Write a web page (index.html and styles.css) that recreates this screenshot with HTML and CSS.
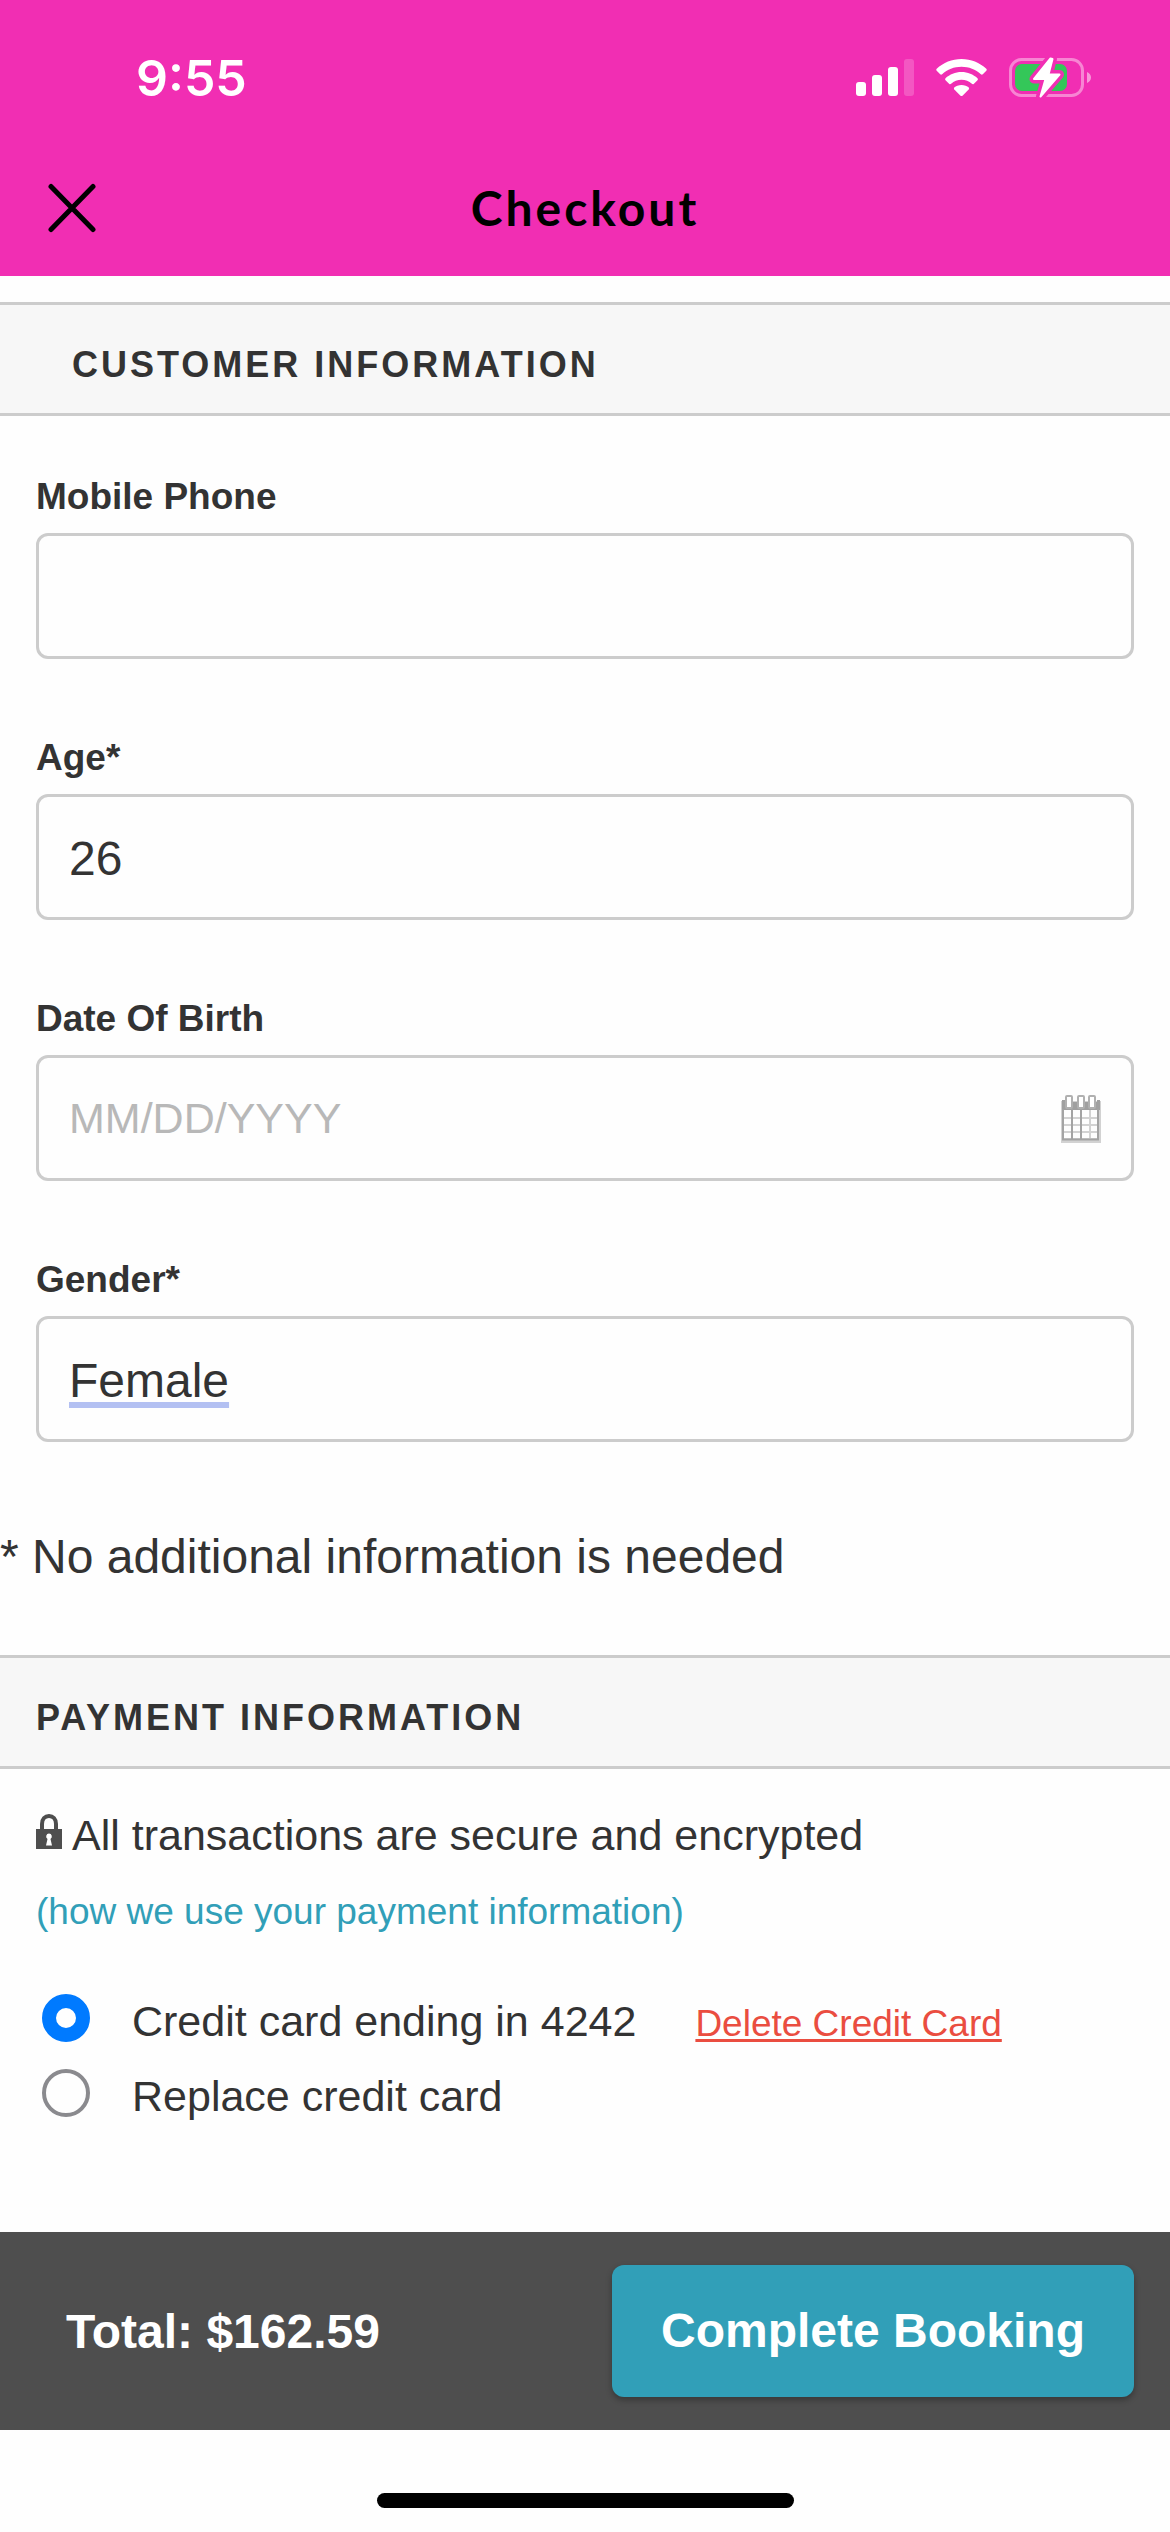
FILE: index.html
```html
<!DOCTYPE html>
<html lang="en">
<head>
  <meta charset="utf-8">
  <meta name="viewport" content="width=device-width, initial-scale=1">
  <title>Checkout</title>
  <link rel="stylesheet" href="styles.css">
</head>
<body>
  <header class="top">
    <div class="status">
      <time class="status-time">9:55</time>
      <div class="status-icons">
        <svg width="58" height="38" viewBox="0 0 58 38" fill="#fff" aria-hidden="true">
          <rect x="0" y="23" width="10" height="14" rx="3"/>
          <rect x="16" y="16" width="10" height="21" rx="3"/>
          <rect x="32" y="8" width="10" height="29" rx="3"/>
          <rect x="48" y="0" width="10" height="37" rx="3" opacity=".2"/>
        </svg>
        <svg width="51" height="38" viewBox="0 0 51 38" fill="#fff" aria-hidden="true">
          <path d="M25.500 0C35 0 43.700 3.600 50.300 9.800Q51.200 10.800 50.300 11.800L46.800 15.300Q45.800 16 44.900 15.200C39.600 10.400 32.900 7.700 25.500 7.700S11.400 10.400 6.100 15.200Q5.200 16 4.200 15.300L.7 11.800Q-.2 10.800.7 9.800C7.300 3.600 16 0 25.500 0Z"/>
          <path d="M25.500 13C31.700 13 37.300 15.400 41.500 19.200Q42.400 20.200 41.500 21.200L37.700 24.900Q36.800 25.600 35.900 24.800C33 22.300 29.500 20.800 25.500 20.800S18 22.300 15.100 24.800Q14.200 25.600 13.300 24.900L9.500 21.200Q8.600 20.200 9.500 19.200C13.700 15.400 19.300 13 25.500 13Z"/>
          <path d="M25.500 26C28.500 26 31 27 32.800 28.600Q33.500 29.500 32.700 30.400L26.500 36.700Q25.500 37.500 24.500 36.700L18.300 30.400Q17.500 29.500 18.200 28.600C20 27 22.500 26 25.500 26Z"/>
        </svg>
        <svg width="82" height="42" viewBox="0 0 82 42" aria-hidden="true">
          <rect x="1.500" y="2.500" width="72" height="36" rx="11" fill="none" stroke="#fff" stroke-opacity=".42" stroke-width="3"/>
          <path d="M78 15C80.500 16 82 18 82 20.500S80.500 25 78 26Z" fill="#fff" fill-opacity=".5"/>
          <rect x="6" y="7" width="52" height="27" rx="7" fill="#34c759"/>
          <path class="bolt-edge" d="M41.500 1.500L25 22H36.500L31.500 39.500L50.500 17.500H39.500L43.500 2Z"/>
          <path class="bolt" d="M41.500 1.500L25 22H36.500L31.500 39.500L50.500 17.500H39.500L43.500 2Z"/>
        </svg>
      </div>
    </div>
    <div class="nav">
      <button class="close" type="button" aria-label="Close">
        <svg width="48" height="50" viewBox="0 0 48 50" fill="none" stroke="#000" stroke-width="5" stroke-linecap="round" aria-hidden="true">
          <path d="M3 3.500L45 46.500M45 3.500L3 46.500"/>
        </svg>
      </button>
      <h1 class="title">Checkout</h1>
    </div>
  </header>

  <main class="content">
    <section>
      <h2 class="section-title section-title-inset">CUSTOMER INFORMATION</h2>
      <div class="fields">
        <div class="field">
          <label class="field-label" for="phone">Mobile Phone</label>
          <input class="field-input" id="phone" type="tel">
        </div>
        <div class="field">
          <label class="field-label" for="age">Age*</label>
          <input class="field-input" id="age" type="text" inputmode="numeric" value="26">
        </div>
        <div class="field">
          <label class="field-label" for="dob">Date Of Birth</label>
          <div class="date">
            <input class="field-input date-input" id="dob" type="text" placeholder="MM/DD/YYYY">
            <button class="date-button" type="button" aria-label="Choose a date">
              <svg width="40" height="48" viewBox="0 0 40 48" aria-hidden="true">
                <path d="M0 6H40V48H0Z" fill="#d2d2d2"/>
                <path d="M1 5H4V7H36V5H39V15H1Z" fill="#a0a0a0"/>
                <path d="M3 15H10V22H3ZM12 15H19V22H12ZM21 15H28V22H21ZM30 15H36V22H30ZM3 24H10V29H3ZM12 24H19V29H12ZM21 24H28V29H21ZM30 24H36V29H30ZM3 31H10V36H3ZM12 31H19V36H12ZM21 31H28V36H21ZM30 31H36V36H30ZM3 38H10V43H3ZM12 38H19V43H12ZM21 38H28V43H21ZM30 38H36V43H30Z" fill="#fdfdfd"/>
                <path d="M2 14V45M11 14V45M20 14V45M37 14V45M1 44.500H38" fill="none" stroke="#a3a3a3" stroke-width="2"/>
                <g fill="#fff" stroke="#b0b0b0" stroke-width="2">
                  <rect x="5" y="1" width="6" height="12" rx="1"/>
                  <rect x="17" y="1" width="6" height="12" rx="1"/>
                  <rect x="28" y="1" width="6" height="12" rx="1"/>
                </g>
              </svg>
            </button>
          </div>
        </div>
        <div class="field">
          <label class="field-label" for="gender">Gender*</label>
          <input class="field-input suggested" id="gender" type="text" value="Female">
        </div>
      </div>
      <p class="note">* No additional information is needed</p>
    </section>

    <section>
      <h2 class="section-title">PAYMENT INFORMATION</h2>
      <div class="payment">
        <p class="secure">
          <svg width="26" height="42" viewBox="0 0 26 42" aria-hidden="true">
            <path d="M6 17V10C6 5 9 2 13 2S20 5 20 10V17" fill="none" stroke="#4e4e4e" stroke-width="4"/>
            <path d="M0 15H26V35H0Z" fill="#4e4e4e"/>
            <path d="M13 19.500A3 3 0 0 1 14.500 25L16 31.500H10L11.500 25A3 3 0 0 1 13 19.500Z" fill="#fff"/>
          </svg>
          <span>All transactions are secure and encrypted</span>
        </p>
        <p class="policy"><a class="policy-link" href="#payment-policy">(how we use your payment information)</a></p>
        <div class="cards">
          <div class="card-option">
            <input class="radio" id="card-saved" type="radio" name="card" checked>
            <label for="card-saved">Credit card ending in 4242</label>
            <a class="delete-link" href="#delete-card">Delete Credit Card</a>
          </div>
          <div class="card-option">
            <input class="radio" id="card-new" type="radio" name="card">
            <label for="card-new">Replace credit card</label>
          </div>
        </div>
      </div>
    </section>
  </main>

  <footer class="summary">
    <p class="total">Total: $162.59</p>
    <button class="book" type="submit">Complete Booking</button>
  </footer>
  <div class="home"><div class="home-bar"></div></div>
</body>
</html>
```
FILE: styles.css
```css
* {
  box-sizing: border-box;
}

body {
  margin: 0;
  min-height: 100vh;
  display: flex;
  flex-direction: column;
  background: #fefefe;
  color: #333;
  font-family: "Liberation Sans", Arial, Helvetica, sans-serif;
}

h1,
h2,
p {
  margin: 0;
}

button,
input {
  font: inherit;
  color: inherit;
}

svg {
  display: block;
  flex: none;
}

/* Top bar */

.top {
  background: #f12eb3;
}

.status {
  display: flex;
  justify-content: space-between;
  align-items: center;
  padding: 48px 79px 34px 136px;
  color: #fff;
}

.status-time {
  font: 600 50px/60px Inter, "Liberation Sans", sans-serif;
}

.status-icons {
  display: flex;
  align-items: center;
  gap: 22px;
}

.bolt,
.bolt-edge {
  fill: #fff;
  stroke: #fff;
  stroke-width: 2;
  stroke-linejoin: round;
}

.bolt-edge {
  stroke: #f12eb3;
  stroke-width: 9;
}

.nav {
  display: grid;
  grid-template-columns: 1fr auto 1fr;
  align-items: center;
  padding: 36px 48px 38px;
}

.close {
  justify-self: start;
  padding: 0;
  border: 0;
  background: none;
}

.title {
  color: #000;
  font: 700 48px/60px Lato, "Liberation Sans", sans-serif;
  letter-spacing: 3px;
}

/* Sections */

.content {
  flex: 1;
  padding-top: 26px;
}

.section-title {
  padding: 33px 36px 21px;
  border: solid #ccc;
  border-width: 3px 0;
  background: #f7f7f7;
  font-size: 36px;
  line-height: 54px;
  letter-spacing: 3px;
}

.section-title-inset {
  padding-left: 72px;
}

.fields {
  display: flex;
  flex-direction: column;
  gap: 75px;
  padding: 57px 36px 0;
}

.field {
  display: flex;
  flex-direction: column;
  gap: 12px;
}

.field-label {
  font-size: 37px;
  font-weight: 700;
  line-height: 48px;
}

.field-input {
  display: block;
  width: 100%;
  height: 126px;
  padding: 3px 30px 0;
  border: 3px solid #ccc;
  border-radius: 12px;
  background: #fefefe;
  font-size: 48px;
}

.suggested {
  text-decoration: underline 6px #b3c0f2;
  text-underline-offset: 5px;
  text-decoration-skip-ink: none;
}

.date {
  position: relative;
}

.date-input {
  padding: 0 96px 0 30px;
  font-size: 43px;
}

.date-input::placeholder {
  color: #b8b8b8;
}

.date-button {
  position: absolute;
  top: 0;
  right: 0;
  height: 100%;
  padding: 2px 33px 0;
  border: 0;
  background: none;
}

.note {
  padding: 85px 0 68px;
  font-size: 48px;
  line-height: 60px;
}

/* Payment */

.payment {
  padding: 39px 36px 109px;
  font-size: 43px;
  line-height: 54px;
}

.secure {
  display: flex;
  align-items: center;
  gap: 10px;
}

.policy {
  margin: 23px 0 55px;
  font-size: 37px;
}

.policy-link {
  color: #319fb8;
  text-decoration: none;
}

.cards {
  display: flex;
  flex-direction: column;
  gap: 21px;
}

.card-option {
  display: flex;
  align-items: baseline;
  height: 54px;
}

.radio {
  appearance: none;
  align-self: flex-start;
  width: 48px;
  height: 48px;
  margin: 0 42px 0 6px;
  border: 4px solid #8a8a8e;
  border-radius: 50%;
}

.radio:checked {
  border: 14px solid #007aff;
}

.delete-link {
  margin-left: 59px;
  color: #ea4d40;
  font-size: 37px;
  line-height: 48px;
  text-decoration-thickness: 3px;
  text-underline-offset: 3px;
  text-decoration-skip-ink: none;
}

/* Bottom bar */

.summary {
  display: flex;
  justify-content: space-between;
  align-items: center;
  padding: 33px 36px 33px 66px;
  background: #4e4e4e;
  color: #fff;
  font-size: 48px;
  font-weight: 700;
}

.book {
  padding: 36px 49px;
  border: 0;
  border-radius: 12px;
  background: #319fb8;
  box-shadow: 0 3px 6px rgba(0, 0, 0, 0.3);
  line-height: 60px;
}

.home {
  display: flex;
  justify-content: center;
  padding: 63px 0 24px;
}

.home-bar {
  width: 417px;
  height: 15px;
  border-radius: 8px;
  background: #000;
}
```
